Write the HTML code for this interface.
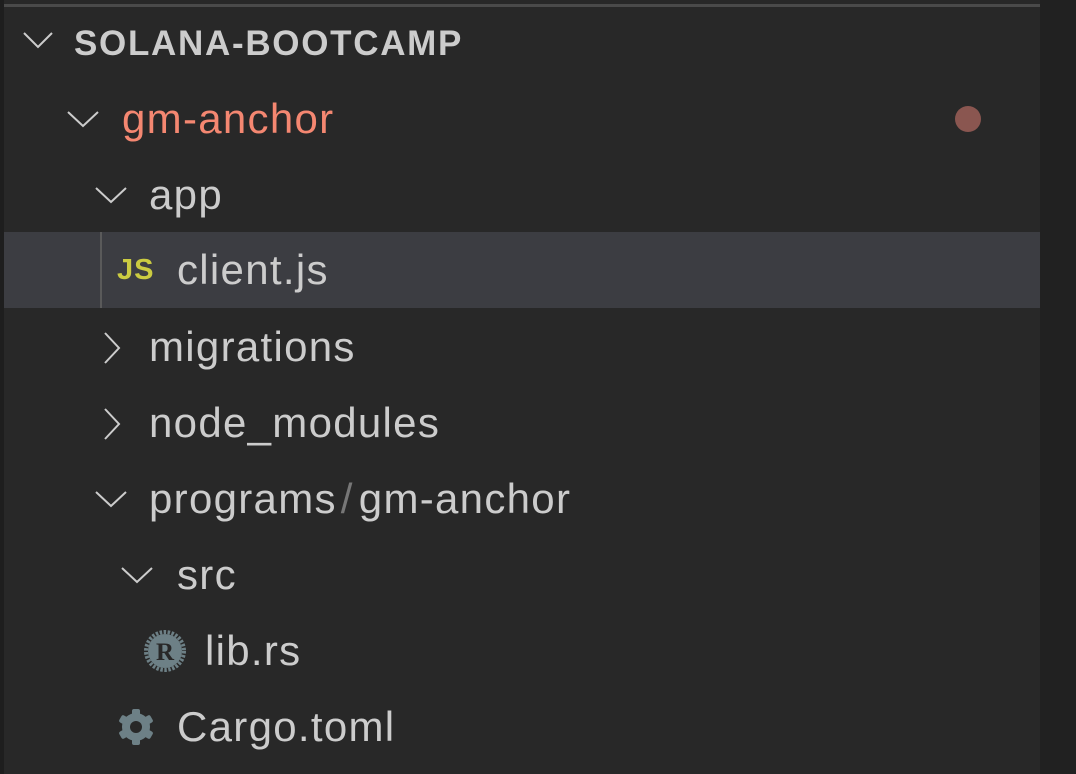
<!DOCTYPE html>
<html><head><style>
body{margin:0;width:1076px;height:774px;background:#1e1e1e;overflow:hidden;font-family:"Liberation Sans",sans-serif;}
.panel{position:absolute;left:4px;top:0;width:1036px;height:774px;background:#282828;}
.topbar{position:absolute;left:0;top:4px;width:1036px;height:3px;background:#4a4a4a;}
.right{position:absolute;left:1040px;top:0;width:36px;height:774px;background:#212121;}
.row{position:absolute;left:0;width:1036px;height:76px;}
.t{position:absolute;top:0;line-height:76px;font-size:42px;letter-spacing:1.3px;color:#cccccc;white-space:nowrap;}
svg{position:absolute;}
.sel{background:#3c3d42;}
</style></head><body>
<div class="panel">
<div class="topbar"></div>
<div class="row" style="top:6px"><svg style="left:18px;top:24px" width="32" height="20" viewBox="0 0 32 20"><path d="M2 3 L16 17 L30 3" stroke="#cccccc" stroke-width="2" fill="none"/></svg><div class="t" style="left:70px;font-weight:bold;font-size:35px;letter-spacing:1.7px">SOLANA-BOOTCAMP</div></div>
<div class="row" style="top:81px"><svg style="left:62px;top:28px" width="34" height="20" viewBox="0 0 34 20"><path d="M2 3 L17 17 L32 3" stroke="#cccccc" stroke-width="2" fill="none"/></svg><div class="t" style="left:118px;color:#f48771">gm-anchor</div><div style="position:absolute;left:951px;top:25px;width:26px;height:26px;border-radius:50%;background:#8a5650"></div></div>
<div class="row" style="top:157px"><svg style="left:90px;top:28px" width="34" height="20" viewBox="0 0 34 20"><path d="M2 3 L17 17 L32 3" stroke="#cccccc" stroke-width="2" fill="none"/></svg><div class="t" style="left:145px">app</div></div>
<div class="row sel" style="top:232px"><div style="position:absolute;left:96px;top:0;width:2px;height:76px;background:#5a5a5a"></div><div class="t" style="left:113px;font-size:29px;font-weight:bold;color:#cbcb41;letter-spacing:1px">JS</div><div class="t" style="left:173px">client.js</div></div>
<div class="row" style="top:309px"><svg style="left:98px;top:22px" width="20" height="34" viewBox="0 0 20 34"><path d="M3 2 L17 17 L3 32" stroke="#cccccc" stroke-width="2" fill="none"/></svg><div class="t" style="left:145px">migrations</div></div>
<div class="row" style="top:385px"><svg style="left:98px;top:22px" width="20" height="34" viewBox="0 0 20 34"><path d="M3 2 L17 17 L3 32" stroke="#cccccc" stroke-width="2" fill="none"/></svg><div class="t" style="left:145px">node_modules</div></div>
<div class="row" style="top:461px"><svg style="left:90px;top:28px" width="34" height="20" viewBox="0 0 34 20"><path d="M2 3 L17 17 L32 3" stroke="#cccccc" stroke-width="2" fill="none"/></svg><div class="t" style="left:145px">programs<span style="color:#777;margin:0 5px 0 4px">/</span>gm-anchor</div></div>
<div class="row" style="top:537px"><svg style="left:116px;top:28px" width="34" height="20" viewBox="0 0 34 20"><path d="M2 3 L17 17 L32 3" stroke="#cccccc" stroke-width="2" fill="none"/></svg><div class="t" style="left:173px">src</div></div>
<div class="row" style="top:613px"><svg style="left:140px;top:17px" width="42" height="42" viewBox="0 0 42 42"><circle cx="21" cy="21" r="19" fill="none" stroke="#6d8086" stroke-width="4" stroke-dasharray="2.5 1.5"/><circle cx="21" cy="21" r="17" fill="#6d8086"/><text x="21" y="30" font-family="Liberation Serif" font-weight="bold" font-size="25" fill="#282828" text-anchor="middle">R</text></svg><div class="t" style="left:201px">lib.rs</div></div>
<div class="row" style="top:689px"><svg style="left:112px;top:18px" width="40" height="40" viewBox="0 0 40 40"><g fill="#6d8086"><circle cx="20" cy="20" r="14"/><rect x="16" y="2" width="8" height="36" rx="2"/><rect x="16" y="2" width="8" height="36" rx="2" transform="rotate(60 20 20)"/><rect x="16" y="2" width="8" height="36" rx="2" transform="rotate(120 20 20)"/></g><circle cx="20" cy="20" r="6" fill="#282828"/></svg><div class="t" style="left:173px">Cargo.toml</div></div>
</div>
<div class="right"></div>
</body></html>
